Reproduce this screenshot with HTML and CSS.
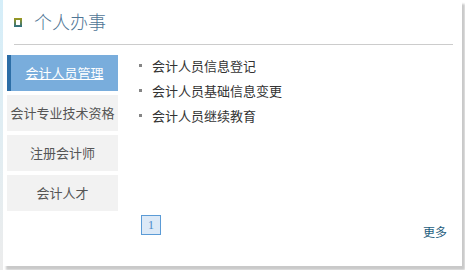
FILE: index.html
```html
<!DOCTYPE html>
<html lang="zh">
<head>
<meta charset="utf-8">
<title>个人办事</title>
<link rel="stylesheet" href="styles.css">
</head>
<body>
<div class="page">
  <div class="strip"></div>
  <div class="panel">
    <div class="header">
      <span class="icon"><span class="icon-inner"></span></span>
      <span class="title">个人办事</span>
    </div>
    <div class="body">
      <ul class="menu">
        <li class="menu-item active"><a href="#">会计人员管理</a></li>
        <li class="menu-item">会计专业技术资格</li>
        <li class="menu-item">注册会计师</li>
        <li class="menu-item">会计人才</li>
      </ul>
      <ul class="list">
        <li>会计人员信息登记</li>
        <li>会计人员基础信息变更</li>
        <li>会计人员继续教育</li>
      </ul>
    </div>
    <div class="footer">
      <span class="pager">1</span>
      <a class="more" href="#">更多</a>
    </div>
  </div>
</div>
</body>
</html>
```

FILE: styles.css
```css
html, body {
  margin: 0;
  padding: 0;
  background: #ffffff;
}
body {
  font-family: "Noto Sans CJK SC", "Noto Sans", sans-serif;
  width: 465px;
  height: 270px;
  overflow: hidden;
}
.page {
  display: flex;
  height: 270px;
}
.strip {
  width: 3px;
  height: 270px;
  background: linear-gradient(#d5eef9, #ececec);
}
.panel {
  width: 459px;
  height: 266px;
  background: #ffffff;
  box-shadow: 3px 4px 2px #c9c9c9;
  display: flex;
  flex-direction: column;
}
.header {
  display: flex;
  align-items: center;
  height: 40px;
  padding-top: 1px;
  padding-bottom: 3px;
  margin-left: 11px;
  margin-right: 9px;
  border-bottom: 1px solid #cccccc;
}
.icon {
  display: block;
  width: 8px;
  height: 9px;
  padding: 2px;
  box-sizing: border-box;
  background: linear-gradient(#9e9a1c, #2c6f84);
  margin-top: 2px;
}
.icon-inner {
  display: block;
  width: 4px;
  height: 5px;
  background: #ffffff;
}
.title {
  margin-left: 12px;
  font-size: 18px;
  line-height: 22px;
  font-weight: 300;
  color: #4f7595;
}
.body {
  display: flex;
  margin-top: 10px;
}
.menu {
  list-style: none;
  margin: 0 0 0 4px;
  padding: 0;
  width: 111px;
  display: flex;
  flex-direction: column;
  gap: 4px;
}
.menu-item {
  height: 36px;
  line-height: 36px;
  background: #f2f2f2;
  color: #555555;
  font-size: 13px;
  text-align: center;
  white-space: nowrap;
}
.menu-item.active {
  background: #79addc;
  border-left: 4px solid #2c6ea7;
}
.menu-item.active a {
  color: #ffffff;
  text-decoration: underline;
}
.list {
  list-style: none;
  margin: -2px 0 0 21px;
  padding: 0;
}
.list li {
  display: flex;
  align-items: center;
  height: 25px;
  font-size: 13px;
  color: #333333;
}
.list li::before {
  content: "";
  width: 3px;
  height: 3px;
  background: #858585;
  margin-right: 10px;
  flex: none;
}
.footer {
  display: flex;
  justify-content: space-between;
  align-items: flex-start;
  margin-top: 4px;
  margin-left: 138px;
  margin-right: 15px;
}
.pager {
  display: block;
  width: 20px;
  height: 20px;
  box-sizing: border-box;
  border: 1px solid #5b9bd6;
  background: #dce9f7;
  color: #4a89c9;
  font-family: "Liberation Serif", serif;
  font-size: 12px;
  line-height: 18px;
  text-align: center;
}
.more {
  margin-top: 10px;
  font-size: 12px;
  line-height: 14px;
  color: #1f5e7e;
  text-decoration: none;
}
```
